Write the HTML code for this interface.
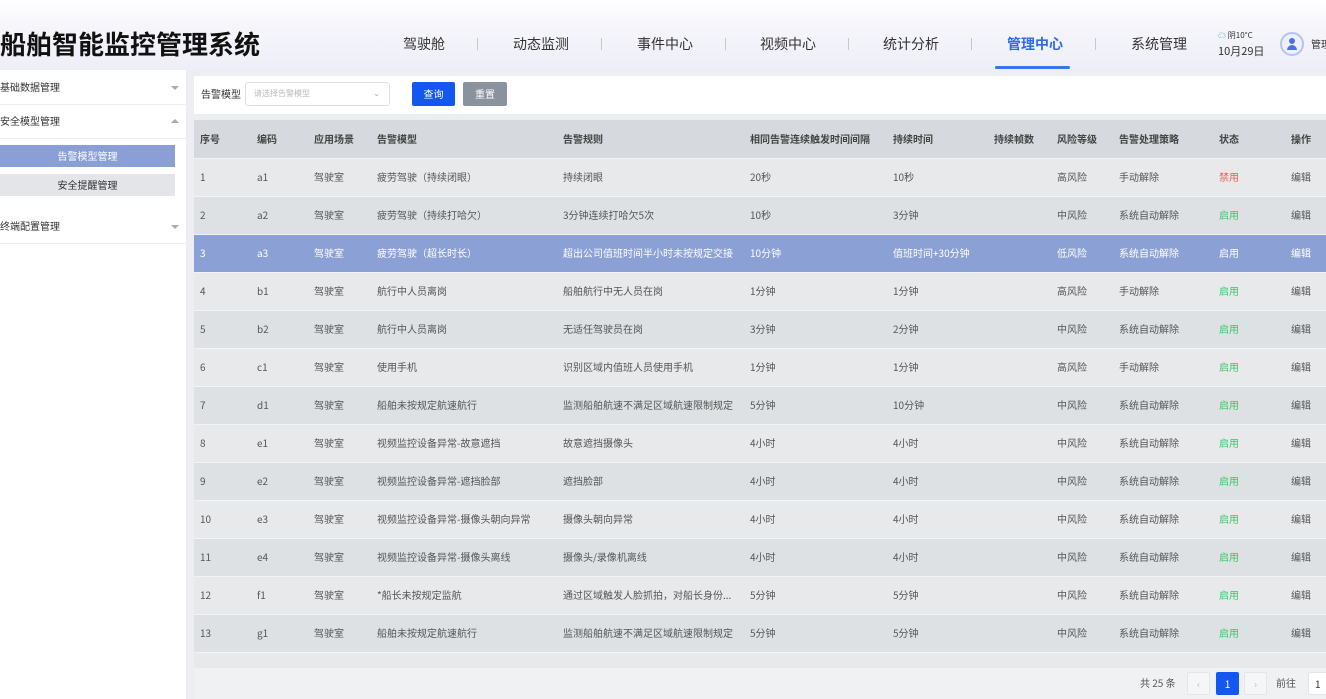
<!DOCTYPE html>
<html><head><meta charset="utf-8"><style>
*{margin:0;padding:0;box-sizing:border-box}
body{width:1326px;height:699px;overflow:hidden;background:#eceef1;font-family:"Noto Sans CJK SC","Liberation Sans",sans-serif;position:relative;color:#555}
.hdr{position:absolute;left:0;top:0;width:1326px;height:70px;background:linear-gradient(180deg,#fff 0%,#f5f5fb 40%,#eeeef8 100%)}
.title{position:absolute;left:0;top:26px;font-size:26px;line-height:36px;font-weight:bold;color:#111;white-space:nowrap}
.nav{position:absolute;top:34px;font-size:14px;line-height:20px;color:#333;white-space:nowrap}
.sep{position:absolute;top:38px;width:1px;height:12px;background:#c8c8d0}
.act{color:#2d6ae8;font-weight:bold}
.uline{position:absolute;left:995px;top:66px;width:75px;height:3px;background:#3a74ee;border-radius:2px}
.side{position:absolute;left:0;top:70px;width:186px;height:629px;background:#fff}
.si{position:absolute;left:0;font-size:10px;line-height:14px;color:#333}
.arr{position:absolute;left:171px;width:0;height:0;border-left:4px solid transparent;border-right:4px solid transparent}
.sub{position:absolute;left:0;width:175px;height:22px;font-size:10px;text-align:center;line-height:22px}
.filter{position:absolute;left:194px;top:76px;width:1132px;height:38px;background:#fff}
table{position:absolute;left:194px;top:120px;width:1132px;border-collapse:collapse;font-size:10px}
td,th{height:38px;line-height:14px;text-align:left;vertical-align:middle;font-weight:normal;white-space:nowrap;padding:0}
th{font-weight:bold;color:#444;background:#d6d9dd}
tr.o td{background:#e8e9eb}
tr.e td{background:#dee1e4}
tr.h td{background:#8ba1d5;color:#fff}
tr td{border-top:1px solid #f2f3f4}
.r{color:#f05a5a}.g{color:#3bc56a}
.pg{position:absolute;left:194px;top:668px;width:1132px;height:31px;background:#f0f1f3}
.pg div{line-height:14px}
</style></head><body>
<div class="hdr">
<div class="title">船舶智能监控管理系统</div>
<div class="nav" style="left:403px">驾驶舱</div><div class="sep" style="left:477px"></div>
<div class="nav" style="left:513px">动态监测</div><div class="sep" style="left:601px"></div>
<div class="nav" style="left:637px">事件中心</div><div class="sep" style="left:725px"></div>
<div class="nav" style="left:760px">视频中心</div><div class="sep" style="left:848px"></div>
<div class="nav" style="left:883px">统计分析</div><div class="sep" style="left:971px"></div>
<div class="nav act" style="left:1007px">管理中心</div><div class="sep" style="left:1095px"></div>
<div class="nav" style="left:1131px">系统管理</div>
<div class="uline"></div>
<div style="position:absolute;left:1218px;top:30px;font-size:8px;line-height:12px;color:#333;white-space:nowrap"><span style="color:#3a8ef0">☁</span> 阴10°C</div>
<div style="position:absolute;left:1218px;top:44px;font-size:11px;line-height:14px;color:#333;white-space:nowrap">10月29日</div>
<div style="position:absolute;left:1280px;top:32px;width:24px;height:24px;border-radius:50%;border:2px solid #b8c4f0;background:#eef0fb"><div style="position:absolute;left:7px;top:4px;width:6px;height:6px;border-radius:50%;background:#4a70e0"></div><div style="position:absolute;left:5px;top:11px;width:10px;height:5px;border-radius:5px 5px 0 0;background:#4a70e0"></div></div>
<div style="position:absolute;left:1311px;top:37px;font-size:10px;line-height:14px;color:#333;white-space:nowrap">管理</div>
</div>
<div class="side">
<div class="si" style="top:10px">基础数据管理</div><div class="arr" style="top:16px;border-top:4px solid #aaa"></div>
<div style="position:absolute;left:0;top:34px;width:186px;height:1px;background:#eee"></div>
<div class="si" style="top:44px">安全模型管理</div><div class="arr" style="top:49px;border-bottom:4px solid #aaa"></div>
<div style="position:absolute;left:0;top:68px;width:186px;height:1px;background:#eee"></div>
<div class="sub" style="top:75px;background:#8a9fd6;color:#fff">告警模型管理</div>
<div class="sub" style="top:104px;background:#e3e5e8;color:#333">安全提醒管理</div>
<div class="si" style="top:149px">终端配置管理</div><div class="arr" style="top:155px;border-top:4px solid #aaa"></div>
<div style="position:absolute;left:0;top:173px;width:186px;height:1px;background:#eee"></div>
</div>
<div class="filter">
<div style="position:absolute;left:7px;top:11px;font-size:10px;line-height:14px;color:#333">告警模型</div>
<div style="position:absolute;left:51px;top:6px;width:145px;height:24px;border:1px solid #dcdfe6;border-radius:3px;font-size:8px;color:#bbb;line-height:22px;padding-left:8px">请选择告警模型<span style="position:absolute;right:9px;color:#aaa">⌄</span></div>
<div style="position:absolute;left:218px;top:6px;width:43px;height:24px;background:#1456f0;border-radius:2px;color:#fff;font-size:10px;text-align:center;line-height:24px">查询</div>
<div style="position:absolute;left:269px;top:6px;width:44px;height:24px;background:#8a929e;border-radius:2px;color:#fff;font-size:10px;text-align:center;line-height:24px">重置</div>
</div>
<table>
<colgroup><col style="width:63px"><col style="width:57px"><col style="width:63px"><col style="width:186px"><col style="width:187px"><col style="width:143px"><col style="width:101px"><col style="width:63px"><col style="width:62px"><col style="width:100px"><col style="width:72px"><col style="width:35px"></colgroup>
<tr><th style="padding-left:6px">序号</th><th>编码</th><th>应用场景</th><th>告警模型</th><th>告警规则</th><th>相同告警连续触发时间间隔</th><th>持续时间</th><th>持续帧数</th><th>风险等级</th><th>告警处理策略</th><th>状态</th><th>操作</th></tr>
<tr class="o"><td style="padding-left:6px">1</td><td>a1</td><td>驾驶室</td><td>疲劳驾驶（持续闭眼）</td><td>持续闭眼</td><td>20秒</td><td>10秒</td><td></td><td>高风险</td><td>手动解除</td><td class="r">禁用</td><td>编辑</td></tr>
<tr class="e"><td style="padding-left:6px">2</td><td>a2</td><td>驾驶室</td><td>疲劳驾驶（持续打哈欠）</td><td>3分钟连续打哈欠5次</td><td>10秒</td><td>3分钟</td><td></td><td>中风险</td><td>系统自动解除</td><td class="g">启用</td><td>编辑</td></tr>
<tr class="h"><td style="padding-left:6px">3</td><td>a3</td><td>驾驶室</td><td>疲劳驾驶（超长时长）</td><td>超出公司值班时间半小时未按规定交接</td><td>10分钟</td><td>值班时间+30分钟</td><td></td><td>低风险</td><td>系统自动解除</td><td class="g">启用</td><td>编辑</td></tr>
<tr class="o"><td style="padding-left:6px">4</td><td>b1</td><td>驾驶室</td><td>航行中人员离岗</td><td>船舶航行中无人员在岗</td><td>1分钟</td><td>1分钟</td><td></td><td>高风险</td><td>手动解除</td><td class="g">启用</td><td>编辑</td></tr>
<tr class="e"><td style="padding-left:6px">5</td><td>b2</td><td>驾驶室</td><td>航行中人员离岗</td><td>无适任驾驶员在岗</td><td>3分钟</td><td>2分钟</td><td></td><td>中风险</td><td>系统自动解除</td><td class="g">启用</td><td>编辑</td></tr>
<tr class="o"><td style="padding-left:6px">6</td><td>c1</td><td>驾驶室</td><td>使用手机</td><td>识别区域内值班人员使用手机</td><td>1分钟</td><td>1分钟</td><td></td><td>高风险</td><td>手动解除</td><td class="g">启用</td><td>编辑</td></tr>
<tr class="e"><td style="padding-left:6px">7</td><td>d1</td><td>驾驶室</td><td>船舶未按规定航速航行</td><td>监测船舶航速不满足区域航速限制规定</td><td>5分钟</td><td>10分钟</td><td></td><td>中风险</td><td>系统自动解除</td><td class="g">启用</td><td>编辑</td></tr>
<tr class="o"><td style="padding-left:6px">8</td><td>e1</td><td>驾驶室</td><td>视频监控设备异常-故意遮挡</td><td>故意遮挡摄像头</td><td>4小时</td><td>4小时</td><td></td><td>中风险</td><td>系统自动解除</td><td class="g">启用</td><td>编辑</td></tr>
<tr class="e"><td style="padding-left:6px">9</td><td>e2</td><td>驾驶室</td><td>视频监控设备异常-遮挡脸部</td><td>遮挡脸部</td><td>4小时</td><td>4小时</td><td></td><td>中风险</td><td>系统自动解除</td><td class="g">启用</td><td>编辑</td></tr>
<tr class="o"><td style="padding-left:6px">10</td><td>e3</td><td>驾驶室</td><td>视频监控设备异常-摄像头朝向异常</td><td>摄像头朝向异常</td><td>4小时</td><td>4小时</td><td></td><td>中风险</td><td>系统自动解除</td><td class="g">启用</td><td>编辑</td></tr>
<tr class="e"><td style="padding-left:6px">11</td><td>e4</td><td>驾驶室</td><td>视频监控设备异常-摄像头离线</td><td>摄像头/录像机离线</td><td>4小时</td><td>4小时</td><td></td><td>中风险</td><td>系统自动解除</td><td class="g">启用</td><td>编辑</td></tr>
<tr class="o"><td style="padding-left:6px">12</td><td>f1</td><td>驾驶室</td><td>*船长未按规定监航</td><td>通过区域触发人脸抓拍，对船长身份...</td><td>5分钟</td><td>5分钟</td><td></td><td>中风险</td><td>系统自动解除</td><td class="g">启用</td><td>编辑</td></tr>
<tr class="e"><td style="padding-left:6px">13</td><td>g1</td><td>驾驶室</td><td>船舶未按规定航速航行</td><td>监测船舶航速不满足区域航速限制规定</td><td>5分钟</td><td>5分钟</td><td></td><td>中风险</td><td>系统自动解除</td><td class="g">启用</td><td>编辑</td></tr>
<tr class="o"><td colspan="12" style="height:16px"></td></tr>
</table>
<div class="pg">
<div style="position:absolute;left:946px;top:8px;font-size:10px;color:#555">共 25 条</div>
<div style="position:absolute;left:993px;top:4px;width:23px;height:23px;background:#f5f6f7;border:1px solid #e4e6ea;border-radius:2px;color:#bbb;font-size:10px;text-align:center;line-height:21px">‹</div>
<div style="position:absolute;left:1022px;top:4px;width:23px;height:23px;background:#1456f0;border-radius:2px;color:#fff;font-size:10px;text-align:center;line-height:23px">1</div>
<div style="position:absolute;left:1050px;top:4px;width:23px;height:23px;background:#f5f6f7;border:1px solid #e4e6ea;border-radius:2px;color:#bbb;font-size:10px;text-align:center;line-height:21px">›</div>
<div style="position:absolute;left:1082px;top:8px;font-size:10px;color:#555">前往</div>
<div style="position:absolute;left:1114px;top:4px;width:30px;height:23px;background:#fff;border:1px solid #e4e6ea;border-radius:2px;font-size:10px;line-height:21px;padding-left:6px;color:#333">1</div>
</div>
</body></html>
